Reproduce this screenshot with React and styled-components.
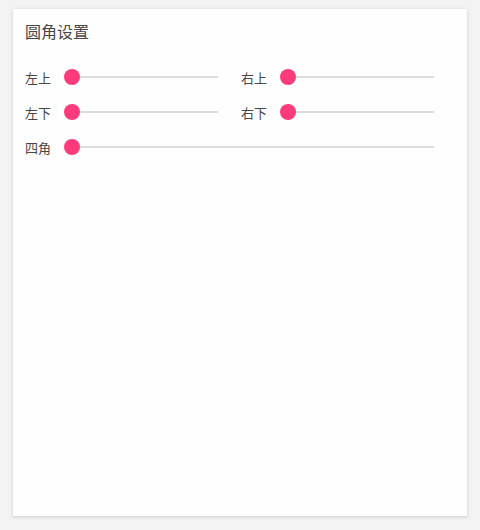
import React from "react";
import styled, { createGlobalStyle } from "styled-components";

const GlobalStyle = createGlobalStyle`
  html, body {
    margin: 0;
    padding: 0;
    background: #f3f3f3;
    font-family: "Noto Sans CJK SC", "Noto Sans", sans-serif;
  }
`;

const Page = styled.div`
  width: 480px;
  height: 530px;
  padding: 9px 13px 14px;
  box-sizing: border-box;
`;

const Card = styled.div`
  width: 454px;
  height: 507px;
  background: #fdfefd;
  box-shadow: 0 1px 4px rgba(0, 0, 0, 0.16);
  padding: 11px 12px;
  box-sizing: border-box;
`;

const Title = styled.h2`
  margin: 0;
  font-size: 16px;
  line-height: 22px;
  font-weight: 400;
  color: #474747;
`;

const Grid = styled.div`
  width: 409px;
  margin-top: 25px;
  display: grid;
  grid-template-columns: 193px 193px;
  column-gap: 23px;
  row-gap: 15px;
`;

const Row = styled.div`
  display: flex;
  align-items: center;
  height: 20px;
  grid-column: ${(p) => (p.$wide ? "1 / -1" : "auto")};
`;

const Label = styled.span`
  width: 39px;
  flex-shrink: 0;
  font-size: 13px;
  color: #474747;
`;

const SliderBox = styled.div`
  position: relative;
  flex: 1;
  height: 16px;
  display: flex;
  align-items: center;
`;

const Track = styled.div`
  margin-left: 8px;
  flex: 1;
  height: 2px;
  background: #dcdcdc;
`;

const Thumb = styled.div`
  position: absolute;
  left: ${(p) => p.$pos}%;
  top: 0;
  width: 16px;
  height: 16px;
  border-radius: 50%;
  background: #fd3a7c;
`;

const Slider = ({ value }) => (
  <SliderBox>
    <Track />
    <Thumb $pos={value} />
  </SliderBox>
);

const corners = [
  { name: "左上" },
  { name: "右上" },
  { name: "左下" },
  { name: "右下" },
  { name: "四角", wide: true },
];

export default function App() {
  return (
    <>
      <GlobalStyle />
      <Page>
        <Card>
          <Title>圆角设置</Title>
          <Grid>
            {corners.map((c) => (
              <Row key={c.name} $wide={c.wide}>
                <Label>{c.name}</Label>
                <Slider value={0} />
              </Row>
            ))}
          </Grid>
        </Card>
      </Page>
    </>
  );
}
